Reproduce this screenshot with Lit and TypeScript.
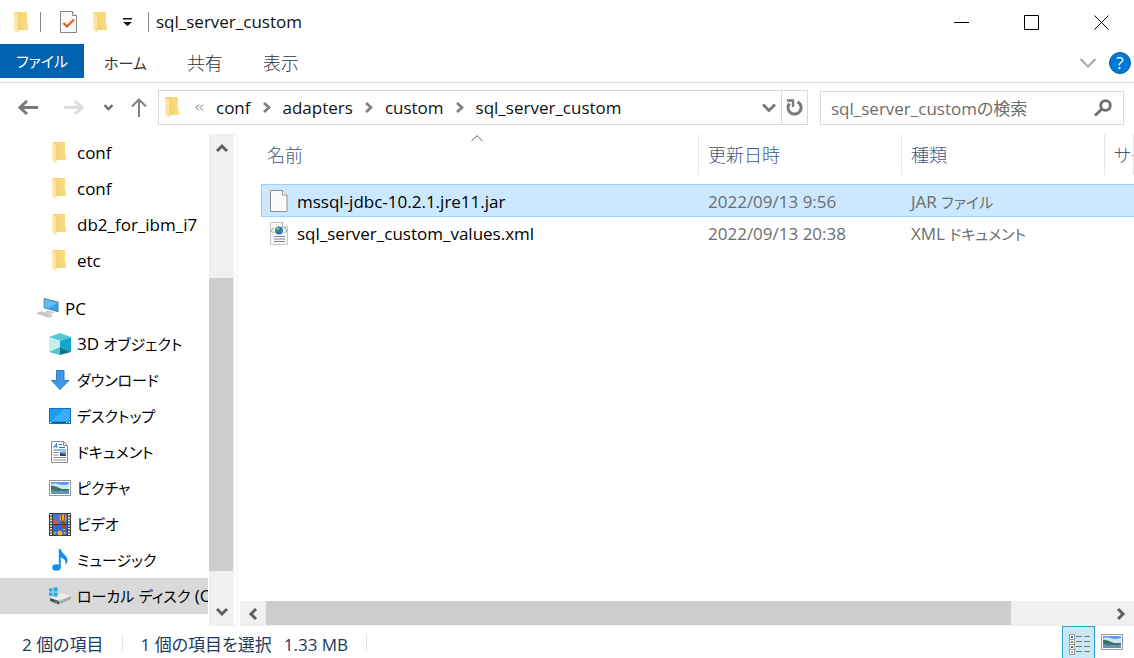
import { LitElement, html, css, svg } from "lit";
import { customElement, state } from "lit/decorators.js";

const folder = html`<svg class="folder" viewBox="0 0 14 21" width="14" height="21" aria-hidden="true">
  <defs>
    <linearGradient id="fb" x1="0" x2="1"><stop offset="0" stop-color="#f3cf6c" /><stop offset="1" stop-color="#fbdc86" /></linearGradient>
    <linearGradient id="ff" x1="0" x2="1"><stop offset="0" stop-color="#ffe9ad" /><stop offset="1" stop-color="#fde09a" /></linearGradient>
  </defs>
  <path d="M0 0H13V12L14 13V18H3L0 17Z" fill="url(#fb)" />
  <path d="M0 0L5 3V18L4 21L0 18Z" fill="url(#ff)" />
  <path d="M5 3V18" stroke="#edc55c" stroke-width=".6" />
</svg>`;

const photo = html`<svg viewBox="0 0 22 16" width="22" height="16" aria-hidden="true">
  <rect x=".5" y=".5" width="21" height="15" fill="#fff" stroke="#9a9a9a" />
  <rect x="2" y="2" width="18" height="12" fill="#cfe6f8" />
  <path d="M2 2H20V4Q14 6 9 4T2 5Z" fill="#5d9bea" />
  <path d="M2 6C6 5 9 8 13 9L20 9V11H2Z" fill="#3e7562" />
  <path d="M2 10Q10 12 20 10.500V14H2Z" fill="#5d93b4" />
</svg>`;

const icons: Record<string, unknown> = {
  folder,
  photo,
  pc: html`<svg viewBox="0 0 23 21" width="22" height="20" aria-hidden="true">
    <path d="M7 0L22.500 4V15L7 10.500Z" fill="#62707c" />
    <path d="M8 1.200L21.500 4.900V13.600L8 9.800Z" fill="#2aa7f5" />
    <path d="M8 1.200L21.500 4.900L12 11L8 9.800Z" fill="#5cc1fa" />
    <path d="M10 13.500L19 14.500L15 17L8 15Z" fill="#c9ced2" />
    <path d="M0 16L5 14.500L16 18.500L12 20.500Z" fill="#d9dde0" stroke="#a9b0b5" stroke-width=".7" />
    <path d="M3 15.500L13 19M2 16.500L8 15.500M6 17.800L12 16.800" stroke="#a9b0b5" stroke-width=".5" />
  </svg>`,
  cube: html`<svg viewBox="0 0 22 22" width="22" height="22" aria-hidden="true">
    <path d="M11 0L22 4L11 8L0 4Z" fill="#56c6d2" />
    <path d="M0 4L11 8V14L0 19Z" fill="#c4f0f1" />
    <path d="M22 4L11 8V14L22 19Z" fill="#14a6cd" />
    <path d="M11 14L0 19L11 22Z" fill="#51c5cf" />
    <path d="M11 14L22 19L11 22Z" fill="#0f7486" />
  </svg>`,
  down: html`<svg viewBox="0 0 22 22" width="22" height="22" aria-hidden="true">
    <path d="M7.500 1.500H15V11.500H20L11 20.500L2.500 11.500H7.500Z" fill="#3f98e6" stroke="#2b7bc9" stroke-linejoin="round" />
  </svg>`,
  desktop: html`<svg viewBox="0 0 22 16" width="22" height="16" aria-hidden="true">
    <rect x=".5" y=".5" width="21" height="15" fill="#1a9df5" stroke="#1272b8" />
    <path d="M15 1H21V13H3Z" fill="#39adfa" />
    <path d="M1 14.500H21" stroke="#0c4a7d" />
    <path d="M1 14.500H2.500M17 14.500H18M19.500 14.500H21" stroke="#fff" />
  </svg>`,
  doc: html`<svg viewBox="0 0 22 22" width="22" height="22" aria-hidden="true">
    <path d="M2.500 .5H14.500L18.500 4.500V21.500H2.500Z" fill="#fff" stroke="#8b8b8b" />
    <path d="M14.500 .5V4.500H18.500" fill="none" stroke="#8b8b8b" />
    <path d="M4.500 7L7.500 2.500L8 7M5.500 5.500H8M10 3.500H13M10 6.500H16M4.500 9H17" fill="none" stroke="#1f83d0" />
    <path d="M4.500 11.500H9.500M4.500 14H9.500M4.500 16.500H17M4.500 19H17" stroke="#8e8e8e" />
    <rect x="11" y="10.500" width="6" height="4.500" fill="#5f9bdc" />
    <path d="M11 12L17 13.500V15H11Z" fill="#26485e" />
  </svg>`,
  video: html`<svg viewBox="0 0 22 23" width="22" height="23" aria-hidden="true">
    <rect width="22" height="23" fill="#3c3c3c" />
    <path d="M2 1V22M20 1V22" stroke="#e8e8e8" stroke-width="2" stroke-dasharray="1.600 1.200" />
    <rect x="4" y="1" width="14" height="10" fill="#3f78dd" />
    <rect x="4" y="12" width="14" height="10" fill="#2f68d6" />
    <path d="M4 7L8 6L10 11H4Z" fill="#c35b62" />
    <circle cx="14" cy="5" r="3.500" fill="#e9ae16" />
    <path d="M12.500 2Q11.500 5 13.500 9M15.500 2Q16.500 5 14.500 9" fill="none" stroke="#b3261d" />
    <path d="M12 9H17V11H12Z" fill="#3a7b29" />
    <circle cx="15" cy="14" r="2.200" fill="#dc2c22" />
    <path d="M14 16.500H16" stroke="#f0c321" />
    <circle cx="11" cy="20" r="2.500" fill="#edb51b" />
    <path d="M5 21L7 19M15 21L17 19" stroke="#edb51b" stroke-width="1.500" />
  </svg>`,
  music: html`<svg viewBox="0 0 22 22" width="22" height="22" aria-hidden="true">
    <ellipse cx="7.500" cy="18.500" rx="4.300" ry="3.300" fill="#1191ec" />
    <path d="M9.800 0H11.800C12.500 5 19 6 18.500 12Q18.300 14.500 16.500 16C17.300 11.500 15 9.500 11.800 8.500V18.500H9.800Z" fill="#1191ec" />
  </svg>`,
  disk: html`<svg viewBox="0 0 22 18" width="22" height="18" aria-hidden="true">
    <path d="M1 11L13 6.500L22 9L10 14Z" fill="#ececec" />
    <path d="M1 11L10 14V17.500L1 14Z" fill="#4d5150" />
    <path d="M10 14L22 9V12L10 17.500Z" fill="#a9abab" />
    <path d="M0 1.500L3.500 1V4.500H0ZM4.500 .8L8.500 0V4.500H4.500ZM0 5.500H3.500V9L0 8.500ZM4.500 5.500H8.500V9.800L4.500 9.200Z" fill="#1cb0ea" />
    <path d="M6 14.500L8.500 15.300" stroke="#45d04d" stroke-width="1.200" />
  </svg>`,
  file: html`<svg viewBox="0 0 18 22" width="18" height="22" aria-hidden="true">
    <path d="M.5 .5H12.500L17 5V21.500H.5Z" fill="#fafafa" stroke="#8f8f8f" />
    <path d="M12.500 .5V5H17" fill="#fff" stroke="#8f8f8f" />
  </svg>`,
  xml: html`<svg viewBox="0 0 18 23" width="18" height="23" aria-hidden="true">
    <path d="M.5 .5H12.500L17.500 5V22.500H.5Z" fill="#f7f7f7" stroke="#c6c6c6" />
    <path d="M12.500 .5V5H17.500" fill="#fff" stroke="#a8a8a8" />
    <path d="M3.500 6L1 8.500L3.500 11M14.500 6L17 8.500L14.500 11" fill="none" stroke="#8e8e8e" />
    <circle cx="9" cy="8.500" r="4" fill="#2a72c4" />
    <path d="M6 6Q9 3.500 10 6T8 9T6 9ZM11 8L13 8.500L11 12Z" fill="#4aa83e" />
    <path d="M6.500 6.500H8.500" stroke="#a6def5" />
    <path d="M4 14.500H15M4 17H15M4 19.500H15" stroke="#82849c" />
  </svg>`,
  check: html`<svg viewBox="0 0 17 22" width="17" height="22" aria-hidden="true">
    <path d="M.5 .5H12.500L16.500 4.500V21.500H.5Z" fill="#f8f8f8" stroke="#868686" />
    <path d="M12.500 .5V4.500H16.500" fill="#fff" stroke="#868686" />
    <path d="M3.500 12L7 15.500L14 8.500" fill="none" stroke="#ea5a1c" stroke-width="2.200" />
  </svg>`,
};

const chevron = (d: string, w: number, h: number, sw: number, color: string) => html`<svg
  viewBox="0 0 ${w} ${h}" width=${w} height=${h} aria-hidden="true">
  ${svg`<path d=${d} fill="none" stroke=${color} stroke-width=${sw} />`}
</svg>`;

// Katakana runs are set a little smaller than the Latin text beside them.
const label = (text: string) =>
  text.split(/([\u30a0-\u30ff]+)/).map((part, i) => (i % 2 ? html`<span class="kana">${part}</span>` : part));

const crumbs = ["conf", "adapters", "custom", "sql_server_custom"];

const recent = ["conf", "conf", "db2_for_ibm_i7", "etc"];

const places = [
  { icon: "cube", name: "3D オブジェクト" },
  { icon: "down", name: "ダウンロード" },
  { icon: "desktop", name: "デスクトップ" },
  { icon: "doc", name: "ドキュメント" },
  { icon: "photo", name: "ピクチャ" },
  { icon: "video", name: "ビデオ" },
  { icon: "music", name: "ミュージック" },
  { icon: "disk", name: "ローカル ディスク (C:)", current: true },
];

const files = [
  { icon: "file", name: "mssql-jdbc-10.2.1.jre11.jar", date: "2022/09/13 9:56", type: "JAR ファイル" },
  { icon: "xml", name: "sql_server_custom_values.xml", date: "2022/09/13 20:38", type: "XML ドキュメント" },
];

@customElement("app-root")
export class AppRoot extends LitElement {
  @state() private selected = 0;

  static styles = css`
    :host {
      display: flex;
      flex-direction: column;
      height: 100vh;
      overflow: hidden;
      background: #fff;
      color: #111;
      font-family: "Open Sans", "Noto Sans CJK JP", sans-serif;
      font-size: 17px;
      line-height: 24px;
      font-feature-settings: "palt";
      white-space: nowrap;
    }
    * { box-sizing: border-box; }
    svg { display: block; flex: none; }
    button {
      display: flex;
      align-items: center;
      justify-content: center;
      padding: 0;
      border: 0;
      background: none;
      color: inherit;
      font: inherit;
      font-feature-settings: inherit;
    }
    a { color: inherit; text-decoration: none; }
    .kana { font-size: 15px; line-height: 20px; }
    .titlebar { display: flex; align-items: center; height: 44px; padding-left: 14px; }
    .quick { display: flex; align-items: center; }
    .rule { width: 1px; height: 20px; background: #8a8a8a; }
    .quick .rule { margin: 0 19px 0 12px; }
    .quick button { margin-right: 16px; }
    .title { margin: 0 auto 0 7px; font-size: inherit; font-weight: 400; }
    .caption { display: flex; gap: 4px; }
    .caption button { width: 66px; height: 44px; }
    .ribbon { display: flex; align-items: center; height: 39px; border-bottom: 1px solid #dadbdc; color: #333; }
    .tab { height: 34px; margin-bottom: 4px; padding: 4px 20px 0; font-size: 18px; font-weight: 300; }
    .tab .kana { font-weight: 400; }
    .tab.main { padding: 0 16px; background: #0063b1; color: #fff; }
    .help { display: flex; align-items: center; gap: 13px; margin-left: auto; padding-right: 3px; }
    .bubble {
      width: 22px;
      height: 22px;
      border: 1px solid #005a9e;
      border-radius: 50%;
      background: #0078d7;
      color: #fff;
      line-height: 20px;
    }
    .nav { display: flex; align-items: center; padding: 7px 10px 9px 18px; }
    .back { margin-right: 26px; }
    .forward { margin-right: 20px; }
    .history { margin-right: 18px; }
    .up { margin-right: 11px; }
    .address { display: flex; flex: 1; height: 35px; border: 1px solid #d9d9d9; }
    .path { display: flex; flex: 1; align-items: center; gap: 12px; padding-left: 6px; }
    .path button { gap: 12px; }
    .path .folder { margin-right: 4px; }
    .drop { width: 24px; }
    .refresh { width: 26px; border-left: 1px solid #d9d9d9; }
    .search { display: flex; align-items: center; width: 304px; height: 34px; margin-left: 12px; padding: 0 11px 0 10px; border: 1px solid #d9d9d9; }
    .search input {
      flex: 1;
      min-width: 0;
      padding: 2px 0 0;
      border: 0;
      outline: 0;
      background: none;
      font: inherit;
      font-feature-settings: inherit;
    }
    .search input::placeholder { color: #6d6d6d; opacity: 1; }
    .body { display: flex; flex: 1; min-height: 0; }
    .side { width: 208px; overflow: hidden; color: #000; }
    .side ul { margin: 0; padding: 0; list-style: none; }
    .side a { display: flex; align-items: center; gap: 6px; height: 36px; padding-left: 49px; }
    .side .folder { margin: 0 5px 0 3px; }
    .side .root { margin-top: 12px; padding-left: 37px; }
    .side .current { background: #d9d9d9; }
    .text { padding-top: 2px; }
    .vbar { display: flex; flex-direction: column; width: 25px; margin-left: 1px; background: #f0f0f0; }
    .vbar button { height: 28px; }
    .thumb { background: #cdcdcd; }
    .vbar .thumb { width: 24px; flex: 293; }
    .above { flex: 116; }
    .below { flex: 27; }
    .split { width: 2px; margin: 0 2px; background: #f7f7f7; }
    .pane { display: flex; flex: 1; flex-direction: column; min-width: 0; }
    .list { flex: 1; min-height: 0; padding-left: 21px; overflow: hidden; }
    table { width: 100%; table-layout: fixed; border-collapse: separate; border-spacing: 0; }
    th, td { padding: 0; text-align: left; font-weight: 400; }
    th { height: 50px; vertical-align: top; color: #44587c; font-size: 18px; font-weight: 300; }
    .head { position: relative; height: 41px; padding: 9px 0 0 9px; border-right: 1px solid #e5e5e5; overflow: hidden; }
    .head.first { padding-left: 6px; }
    .sort { position: absolute; top: 1px; left: 48%; }
    .mid { width: 203px; }
    .last { width: 29px; }
    td { height: 32px; padding: 2px 0 0 9px; color: #6d6d6d; }
    .selected td { height: 33px; border: 1px solid #99d1ff; border-width: 1px 0; background: #cce8ff; }
    td:first-child { padding: 0 0 0 9px; color: #000; }
    .selected td:first-child { padding-left: 8px; border-left-width: 1px; }
    .name { display: flex; align-items: center; gap: 9px; }
    .hbar { display: flex; height: 25px; background: #f0f0f0; }
    .hbar button { width: 26px; }
    .hbar .thumb { flex: 745; height: 24px; }
    .after { flex: 97; }
    .status { display: flex; align-items: center; height: 32px; padding-left: 22px; color: #1e395b; }
    .status .text { padding-top: 5px; }
    .gap { width: 1px; height: 17px; margin: 0 18px; background: #e3e3e3; }
    .status .size { margin-left: 12px; }
    .views { display: flex; margin-left: auto; padding-right: 5px; }
    .views button { width: 34px; height: 32px; }
    .views .on { width: 33px; padding: 4px 0 0 2px; border: 1px solid #26a0da; border-bottom: 0; background: #cbe8f6; }
    .places .text { padding-top: 0; }
  `;

  render() {
    return html`
      <header class="titlebar">
        <div class="quick">
          ${icons.folder}
          <span class="rule"></span>
          <button aria-label="プロパティ">${icons.check}</button>
          <button aria-label="新しいフォルダー">${icons.folder}</button>
          <button aria-label="カスタマイズ">
            <svg viewBox="0 0 9 8" width="9" height="8" aria-hidden="true"><path d="M0 0H9V1.500H0ZM0 4H9L4.500 8Z" fill="#111" /></svg>
          </button>
        </div>
        <span class="rule"></span>
        <h1 class="title">sql_server_custom</h1>
        <div class="caption">
          <button aria-label="最小化">${chevron("M0 7.500H15", 15, 15, 1, "#000")}</button>
          <button aria-label="最大化">${chevron("M.5 .5H14.500V14.500H.5Z", 15, 15, 1, "#000")}</button>
          <button aria-label="閉じる">${chevron("M.5 .5L14.500 14.500M14.500 .5L.5 14.500", 15, 15, 1, "#000")}</button>
        </div>
      </header>
      <div class="ribbon">
        <button class="tab main">${label("ファイル")}</button>
        <button class="tab">${label("ホーム")}</button>
        <button class="tab">共有</button>
        <button class="tab">表示</button>
        <div class="help">
          <button aria-label="リボンの展開">${chevron("M.5 1L8 8.500L15.500 1", 16, 10, 2, "#a8a8a8")}</button>
          <button class="bubble">?</button>
        </div>
      </div>
      <div class="nav">
        <button class="back" aria-label="戻る">${chevron("M20 7.500H2M9 1L2 7.500L9 14", 20, 15, 3, "#7a7a7a")}</button>
        <button class="forward" aria-label="進む">${chevron("M0 7.500H18M11 1L18 7.500L11 14", 20, 15, 3, "#dddddd")}</button>
        <button class="history" aria-label="最近">${chevron("M.5 1L4.500 5L8.500 1", 9, 7, 2.4, "#707070")}</button>
        <button class="up" aria-label="上へ">${chevron("M8 19V1.500M1 8.500L8 1.500L15 8.500", 16, 19, 2, "#808080")}</button>
        <div class="address">
          <div class="path">
            ${icons.folder}
            ${chevron("M4 .5L1 3.500L4 6.500M8 .5L5 3.500L8 6.500", 9, 7, 1, "#707070")}
            ${crumbs.map(
              (c, i) => html`<button>${c}${i < crumbs.length - 1 ? chevron("M1 1L6 5.500L1 10", 8, 11, 2.8, "#808080") : ""}</button>`
            )}
          </div>
          <button class="drop" aria-label="以前の場所">${chevron("M1 1.500L7 7.500L13 1.500", 14, 10, 3, "#7a7a7a")}</button>
          <button class="refresh" aria-label="更新">
            <svg viewBox="0 0 17 17" width="17" height="17" aria-hidden="true">
              <path d="M11.500 2.800A6.500 6.500 0 1 1 3.500 4.500" fill="none" stroke="#7a7a7a" stroke-width="3" />
              <path d="M1 1.500H7V8" fill="none" stroke="#7a7a7a" stroke-width="2.400" />
            </svg>
          </button>
        </div>
        <label class="search">
          <input type="search" aria-label="検索" placeholder="sql_server_customの検索" />
          <svg viewBox="0 0 18 18" width="18" height="18" aria-hidden="true">
            <circle cx="11.500" cy="6.500" r="4.800" fill="none" stroke="#707070" stroke-width="2.800" />
            <path d="M8 10L1 16.500" stroke="#707070" stroke-width="3" />
          </svg>
        </label>
      </div>
      <div class="body">
        <nav class="side">
          <ul>
            ${recent.map((n) => html`<li><a href="#">${icons.folder}<span class="text">${n}</span></a></li>`)}
            <li><a class="root" href="#">${icons.pc}<span class="text">PC</span></a></li>
          </ul>
          <ul class="places">
            ${places.map(
              (p) => html`<li>
                <a class=${p.current ? "current" : ""} href="#">${icons[p.icon]}<span class="text">${label(p.name)}</span></a>
              </li>`
            )}
          </ul>
        </nav>
        <div class="vbar">
          <button aria-label="上にスクロール">${chevron("M1 8L6 3L11 8", 12, 10, 3, "#606060")}</button>
          <div class="above"></div>
          <div class="thumb"></div>
          <div class="below"></div>
          <button aria-label="下にスクロール">${chevron("M1 2L6 7L11 2", 12, 10, 3, "#606060")}</button>
        </div>
        <div class="split"></div>
        <main class="pane">
          <div class="list">
            <table>
              <thead>
                <tr>
                  <th><div class="head first">名前<span class="sort">${chevron("M.5 6L6 .7L11.500 6", 12, 7, 1, "#606060")}</span></div></th>
                  <th class="mid"><div class="head">更新日時</div></th>
                  <th class="mid"><div class="head">種類</div></th>
                  <th class="last"><div class="head">サイズ</div></th>
                </tr>
              </thead>
              <tbody>
                ${files.map(
                  (f, i) => html`<tr class=${i === this.selected ? "selected" : ""} @click=${() => (this.selected = i)}>
                    <td><div class="name">${icons[f.icon]}<span class="text">${f.name}</span></div></td>
                    <td>${f.date}</td>
                    <td>${label(f.type)}</td>
                    <td></td>
                  </tr>`
                )}
              </tbody>
            </table>
          </div>
          <div class="hbar">
            <button aria-label="左にスクロール">${chevron("M8 1L3 6L8 11", 10, 12, 3, "#606060")}</button>
            <div class="thumb"></div>
            <div class="after"></div>
            <button aria-label="右にスクロール">${chevron("M2 1L7 6L2 11", 10, 12, 3, "#606060")}</button>
          </div>
        </main>
      </div>
      <footer class="status">
        <span class="text">2 個の項目</span>
        <span class="gap"></span>
        <span class="text">1 個の項目を選択</span>
        <span class="text size">1.33 MB</span>
        <span class="gap"></span>
        <div class="views">
          <button class="on" aria-label="詳細" aria-pressed="true">
            <svg viewBox="0 0 22 22" width="22" height="22" aria-hidden="true">
              <path d="M.5 .5H5.500V20.500H.5ZM.5 5.500H5.500M.5 10.500H5.500M.5 15.500H5.500" fill="#fff" stroke="#9a9a9a" />
              <path d="M2 3H4" stroke="#2a7bb5" stroke-width="2" /><path d="M2 8H4" stroke="#6c8a2c" stroke-width="2" />
              <path d="M2 13H4" stroke="#b53a1c" stroke-width="2" /><path d="M2 18H4" stroke="#86aa98" stroke-width="2" />
              <path d="M7 2.500H13M15 2.500H21M7 7.500H13M15 7.500H21M7 12.500H13M15 12.500H21M7 17.500H13M15 17.500H21" stroke="#777" />
            </svg>
          </button>
          <button aria-label="大アイコン" aria-pressed="false">${icons.photo}</button>
        </div>
      </footer>
    `;
  }
}
